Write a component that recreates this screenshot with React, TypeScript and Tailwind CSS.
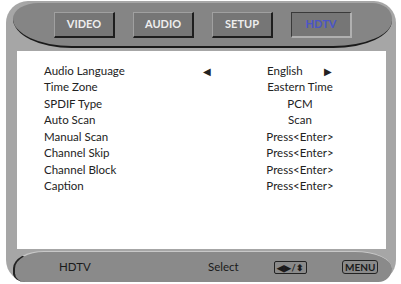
import React from "react";

const tabs = ["VIDEO", "AUDIO", "SETUP", "HDTV"];

const rows: { label: string; value: string; arrows?: boolean }[] = [
  { label: "Audio Language", value: "English", arrows: true },
  { label: "Time Zone", value: "Eastern Time" },
  { label: "SPDIF Type", value: "PCM" },
  { label: "Auto Scan", value: "Scan" },
  { label: "Manual Scan", value: "Press<Enter>" },
  { label: "Channel Skip", value: "Press<Enter>" },
  { label: "Channel Block", value: "Press<Enter>" },
  { label: "Caption", value: "Press<Enter>" },
];

export default function App() {
  return (
    <div className="w-[401px] h-[284px] bg-white pt-[1px] pl-[6px]" style={{ fontFamily: 'Lato, "Noto Sans", sans-serif' }}>
      <div className="w-[390px] h-[281px] bg-[#a6a6a6] rounded-[22px] flex flex-col pl-[7px] pr-[4px] pt-[2px]">
        {/* Tab bar */}
        <div className="h-[45px] bg-[#858585] border-b-2 border-[#1a1a1a] rounded-tl-[26px_16px] rounded-bl-[60px_30px] rounded-tr-[20px_16px] rounded-br-[60px_28px] flex items-start gap-[18px] pl-[41px] pt-[9px]">
          {tabs.map((t) => (
            <div
              key={t}
              className={`w-[61px] h-[26px] flex items-center justify-center bg-[#767676] border border-[#a0a0a0] border-r-2 border-b-2 border-r-[#1e1e1e] border-b-[#1e1e1e] text-[11px] font-bold ${t === "HDTV" ? "text-[#4a55c8] border-t-[#3a3a3a] border-l-[#3a3a3a] border-r-[#b0b0b0] border-b-[#b0b0b0]" : "text-[#eeeeee]"}`}
            >
              {t}
            </div>
          ))}
        </div>
        {/* Content */}
        <div className="ml-[4px] mr-[6px] mt-[3px] h-[199px] bg-white pl-[27px] pt-[12px] text-[11.5px] text-[#222] leading-[16.5px]">
          {rows.map((r) => (
            <div key={r.label} className="flex items-center">
              <div className="w-[159px]">{r.label}</div>
              <div className="w-[18px] text-[10px]">{r.arrows ? "◀" : ""}</div>
              {r.arrows ? (
                <div className="w-[158px] flex items-center pl-[46px]">
                  <span className="w-[57px]">{r.value}</span>
                  <span className="text-[10px]">▶</span>
                </div>
              ) : (
                <div className="w-[158px] text-center">{r.value}</div>
              )}
            </div>
          ))}
        </div>
        {/* Footer */}
        <div className="mt-[2px] h-[31px] bg-[#8a8a8a] border-t border-[#c8c8c8] border-l-2 border-l-[#222] rounded-tl-[50px_28px] rounded-bl-[20px_14px] rounded-tr-[60px_28px] rounded-br-[22px] flex items-center text-[11.5px] text-[#1a1a1a]">
          <span className="ml-[44px] w-[149px]">HDTV</span>
          <span className="w-[66px]">Select</span>
          <span className="h-[13px] w-[33px] border border-[#222] rounded-[2px] text-[9px] font-bold flex items-center justify-center leading-none">◀▶/⬍</span>
          <span className="ml-[35px] h-[14px] px-[2px] border border-[#222] rounded-[3px] text-[10px] font-bold flex items-center leading-none">MENU</span>
        </div>
      </div>
    </div>
  );
}
